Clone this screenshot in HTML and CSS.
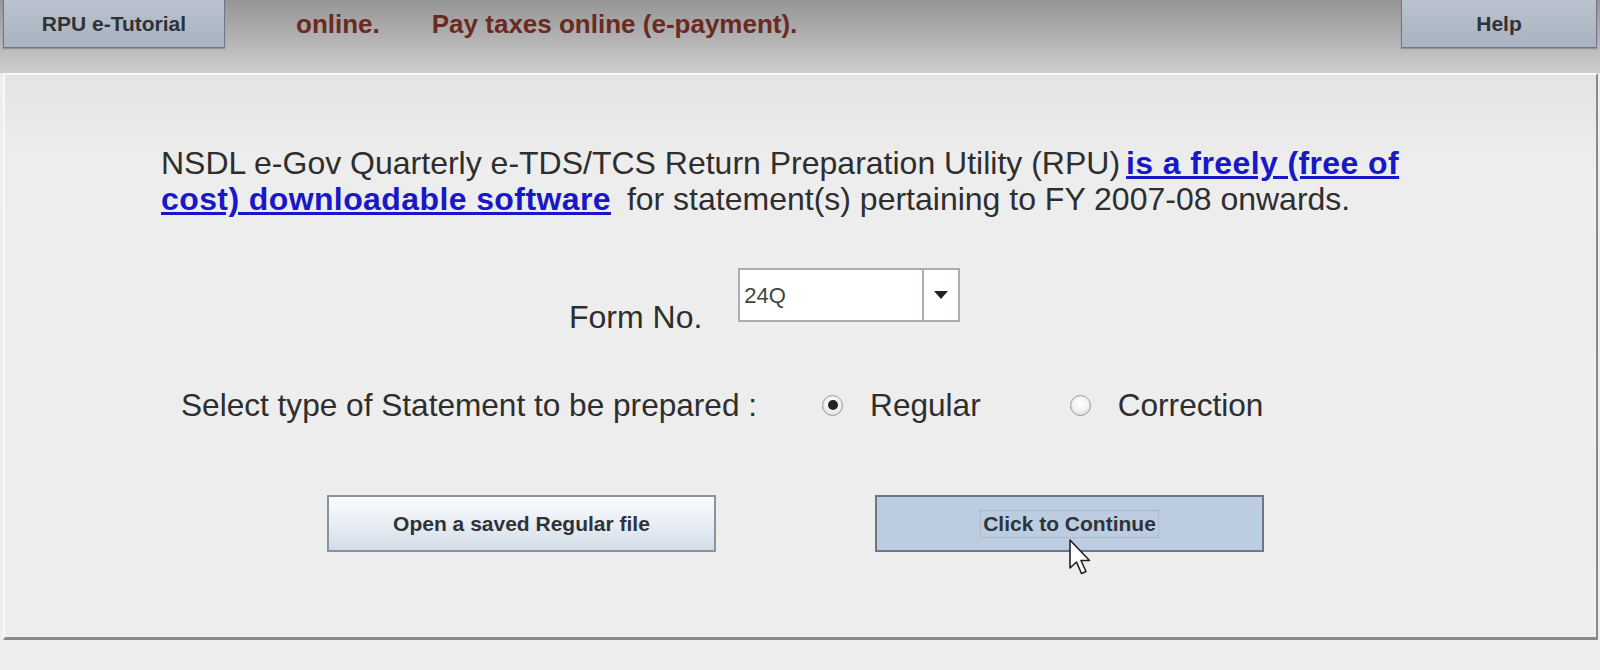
FILE: index.html
```html
<!DOCTYPE html>
<html>
<head>
<meta charset="utf-8">
<link rel="stylesheet" href="styles.css">
</head>
<body>
<div class="header">
  <div class="hbtn tut">RPU e-Tutorial</div>
  <div class="htext">
    <span class="hlink first">online.</span>
    <span class="hlink">Pay taxes online (e-payment).</span>
  </div>
  <div class="hbtn help">Help</div>
</div>
<div class="panel">
  <p class="intro">NSDL e-Gov Quarterly e-TDS/TCS Return Preparation Utility (RPU)<a class="link">is a freely (free of cost) downloadable software</a> for statement(s) pertaining to FY 2007-08 onwards.</p>
  <div class="formrow">
    <span class="flabel">Form No.</span>
    <div class="combo">
      <span class="cval">24Q</span>
      <span class="carrow"><svg width="16" height="10" viewBox="0 0 16 10"><path d="M1 1 H15 L8 9 Z" fill="#222"/></svg></span>
    </div>
  </div>
  <div class="typerow">
    <span class="tlabel">Select type of Statement to be prepared :</span>
    <span class="radio on"></span><span class="rlabel reg">Regular</span>
    <span class="radio"></span><span class="rlabel">Correction</span>
  </div>
  <div class="btnrow">
    <div class="btn">Open a saved Regular file</div>
    <div class="btn active"><span class="focus">Click to Continue</span>
      <svg class="cursor" width="24" height="38" viewBox="0 0 24 38"><path d="M2 2 L2 30 L8.5 24 L13.5 35.5 L18 33.5 L13 22.5 L21.5 22.5 Z" fill="#fff" stroke="#222" stroke-width="1.6" stroke-linejoin="round"/></svg>
    </div>
  </div>
</div>
</body>
</html>
```
FILE: styles.css
```css
html, body {
  margin: 0;
  padding: 0;
}
body {
  width: 1600px;
  height: 670px;
  overflow: hidden;
  background: #eeeeee;
  font-family: "Liberation Sans", Arial, sans-serif;
}
.header {
  height: 73px;
  display: flex;
  align-items: flex-start;
  background: linear-gradient(#969696 0px, #b3b3b3 40px, #cfcfcf 73px);
}
.hbtn {
  height: 48px;
  box-sizing: border-box;
  border: 1px solid #6f7886;
  border-top: none;
  background: linear-gradient(#b9c2cd, #a9b3c1);
  color: #2f3236;
  font-weight: bold;
  font-size: 21px;
  display: flex;
  align-items: center;
  justify-content: center;
  box-shadow: 0 1px 1px rgba(0,0,0,0.2);
}
.tut {
  margin-left: 3px;
  width: 222px;
}
.help {
  margin-right: 3px;
  width: 196px;
}
.htext {
  flex: 1;
  display: flex;
  height: 48px;
  align-items: center;
  padding-left: 71px;
}
.hlink {
  color: #6a2a22;
  font-weight: bold;
  font-size: 26px;
}
.first {
  margin-right: 52px;
}
.panel {
  margin: 0 2px 0 3px;
  height: 567px;
  box-sizing: border-box;
  border-top: 2px solid #f8f8f8;
  border-left: 2px solid #f8f8f8;
  border-right: 2px solid #8a8a8a;
  border-bottom: 3px solid #8a8a8a;
  background: linear-gradient(#e4e4e4 0px, #ededed 90px, #eeeeee 100%);
  padding-top: 70px;
}
.intro {
  margin: 0 0 0 156px;
  width: 1268px;
  font-size: 32px;
  line-height: 36px;
  color: #2e2e2e;
}
.link {
  color: #1818c8;
  font-weight: bold;
  text-decoration: underline;
  margin-left: 6px;
  margin-right: 7px;
  letter-spacing: 0.4px;
}
.formrow {
  display: flex;
  align-items: flex-start;
  margin-top: 51px;
  margin-left: 564px;
}
.flabel {
  font-size: 32px;
  color: #2e2e2e;
  margin-right: 36px;
  line-height: 36px;
  margin-top: 31px;
}
.combo {
  width: 222px;
  height: 54px;
  box-sizing: border-box;
  border: 2px solid #a8aeb6;
  background: #fff;
  display: flex;
}
.cval {
  flex: 1;
  font-size: 22px;
  color: #444;
  padding-left: 4px;
  padding-top: 13px;
}
.carrow {
  width: 34px;
  border-left: 2px solid #a8aeb6;
  display: flex;
  align-items: center;
  justify-content: center;
}
.typerow {
  display: flex;
  align-items: center;
  height: 36px;
  margin-top: 52px;
  margin-left: 176px;
  font-size: 31.6px;
  color: #2e2e2e;
}
.tlabel {
  margin-right: 65px;
}
.radio {
  width: 21px;
  height: 21px;
  box-sizing: border-box;
  border-radius: 50%;
  border: 1px solid #9a9a9a;
  background: radial-gradient(circle at 50% 40%, #ffffff 0%, #f2f2f2 50%, #cfcfcf 100%);
  position: relative;
  margin-right: 27px;
}
.radio.on::after {
  content: "";
  position: absolute;
  left: 4.5px;
  top: 4.5px;
  width: 10px;
  height: 10px;
  border-radius: 50%;
  background: #222;
}
.reg {
  margin-right: 89px;
}
.btnrow {
  display: flex;
  margin-top: 72px;
  margin-left: 322px;
  gap: 159px;
}
.btn {
  width: 389px;
  height: 57px;
  box-sizing: border-box;
  border: 2px solid #8a939e;
  background: linear-gradient(#fafcfe 0%, #e9eef5 50%, #d2dce8 100%);
  font-weight: bold;
  font-size: 21px;
  color: #2f3338;
  display: flex;
  align-items: center;
  justify-content: center;
  position: relative;
}
.btn.active {
  background: #bccde2;
  border-color: #6f7782;
}
.focus {
  border: 1px dotted #9aa6b4;
  padding: 1px 2px;
}
.cursor {
  position: absolute;
  left: 191px;
  top: 41px;
}
```
